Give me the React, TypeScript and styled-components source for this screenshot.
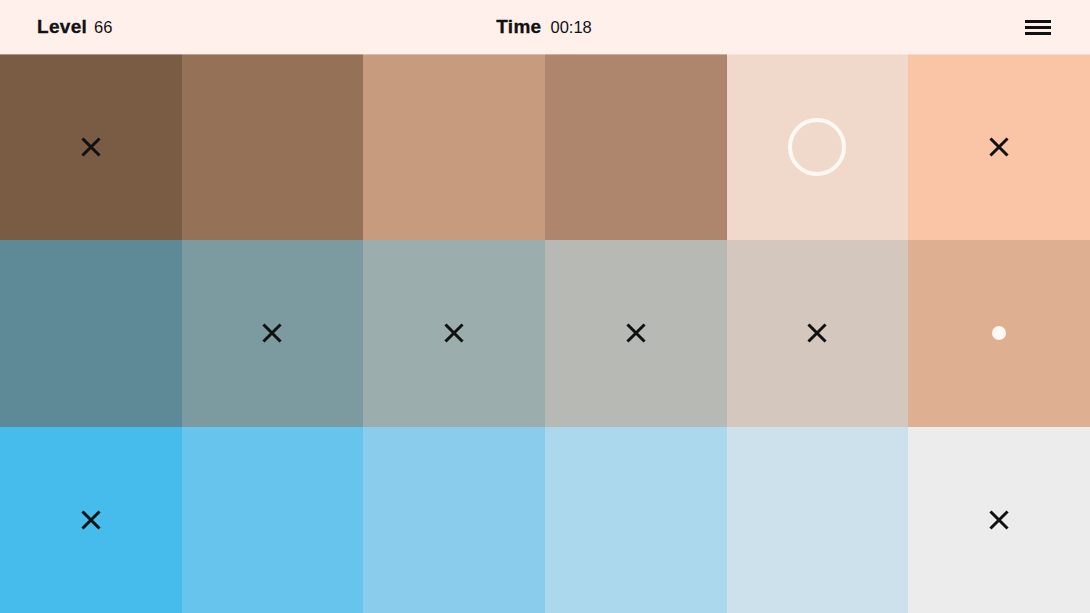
import React from 'react';
import styled, {createGlobalStyle} from 'styled-components';

const GlobalStyle = createGlobalStyle`
  html, body, #root {
    margin: 0;
    padding: 0;
    height: 100%;
  }
  body {
    font-family: 'Liberation Sans', Arial, sans-serif;
    background: #fff0ec;
  }
`;

const Page = styled.div`
  display: flex;
  flex-direction: column;
  height: 100vh;
  overflow: hidden;
`;
Page.displayName = 'S.Page';

const Header = styled.header`
  height: 54px;
  flex: none;
  display: grid;
  grid-template-columns: 1fr auto 1fr;
  align-items: center;
  padding: 0 39px 0 37px;
  background: #fff0ec;
  position: relative;
  z-index: 1;
  box-shadow: 0 1px 0 rgba(255, 255, 255, 0.35);
`;
Header.displayName = 'S.Header';

const Stat = styled.div<{align?: 'start' | 'center'}>`
  display: flex;
  align-items: baseline;
  gap: 7px;
  justify-self: ${props => props.align ?? 'start'};
  color: #111;
`;
Stat.displayName = 'S.Stat';

const StatLabel = styled.span`
  font-weight: 700;
  font-size: 19px;
  letter-spacing: 0.3px;
  -webkit-text-stroke: 0.3px #111;
`;
StatLabel.displayName = 'S.StatLabel';

const StatValue = styled.span<{gap?: number}>`
  font-size: 16.5px;
  margin-left: ${props => props.gap ?? 0}px;
`;
StatValue.displayName = 'S.StatValue';

const MenuButton = styled.button`
  justify-self: end;
  width: 26px;
  height: 15px;
  padding: 0;
  border: none;
  background: transparent;
  display: flex;
  flex-direction: column;
  justify-content: space-between;
  cursor: pointer;
`;
MenuButton.displayName = 'S.MenuButton';

const MenuBar = styled.span`
  display: block;
  height: 3px;
  background: #111;
`;
MenuBar.displayName = 'S.MenuBar';

const Board = styled.main`
  flex: 1;
  display: grid;
  grid-template-columns: repeat(6, 1fr);
  grid-template-rows: repeat(3, 1fr);
`;
Board.displayName = 'S.Board';

const Tile = styled.div<{color: string}>`
  background: ${props => props.color};
  display: flex;
  align-items: center;
  justify-content: center;
`;
Tile.displayName = 'S.Tile';

const Ring = styled.div`
  width: 50px;
  height: 50px;
  border-radius: 50%;
  border: 4px solid #fff8f4;
`;
Ring.displayName = 'S.Ring';

const Dot = styled.div`
  width: 14px;
  height: 14px;
  border-radius: 50%;
  background: #fff8f4;
`;
Dot.displayName = 'S.Dot';

type Mark = 'x' | 'ring' | 'dot' | null;

const Cross = () => (
  <svg width="20" height="20" viewBox="0 0 20 20">
    <path
      d="M2.5 2.5 L17.5 17.5 M17.5 2.5 L2.5 17.5"
      stroke="#111"
      strokeWidth="3"
      strokeLinecap="square"
    />
  </svg>
);

const tiles: {color: string; mark: Mark}[] = [
  {color: '#7a5c45', mark: 'x'},
  {color: '#957157', mark: null},
  {color: '#c79b7d', mark: null},
  {color: '#ae856d', mark: null},
  {color: '#f0d8ca', mark: 'ring'},
  {color: '#f9c5a6', mark: 'x'},
  {color: '#5e8997', mark: null},
  {color: '#7c9ba0', mark: 'x'},
  {color: '#9cadad', mark: 'x'},
  {color: '#b7bab4', mark: 'x'},
  {color: '#d4c7bd', mark: 'x'},
  {color: '#dfaf91', mark: 'dot'},
  {color: '#45bcec', mark: 'x'},
  {color: '#67c4ec', mark: null},
  {color: '#89cceb', mark: null},
  {color: '#abd8ec', mark: null},
  {color: '#cde1ec', mark: null},
  {color: '#ececec', mark: 'x'},
];

const renderMark = (mark: Mark) => {
  if (mark === 'x') return <Cross />;
  if (mark === 'ring') return <Ring />;
  if (mark === 'dot') return <Dot />;
  return null;
};

export default function App() {
  return (
    <>
      <GlobalStyle />
      <Page>
        <Header>
          <Stat>
            <StatLabel>Level</StatLabel>
            <StatValue>66</StatValue>
          </Stat>
          <Stat align="center">
            <StatLabel>Time</StatLabel>
            <StatValue gap={2}>00:18</StatValue>
          </Stat>
          <MenuButton aria-label="Menu">
            <MenuBar />
            <MenuBar />
            <MenuBar />
          </MenuButton>
        </Header>
        <Board>
          {tiles.map((t, i) => (
            <Tile key={i} color={t.color}>
              {renderMark(t.mark)}
            </Tile>
          ))}
        </Board>
      </Page>
    </>
  );
}
